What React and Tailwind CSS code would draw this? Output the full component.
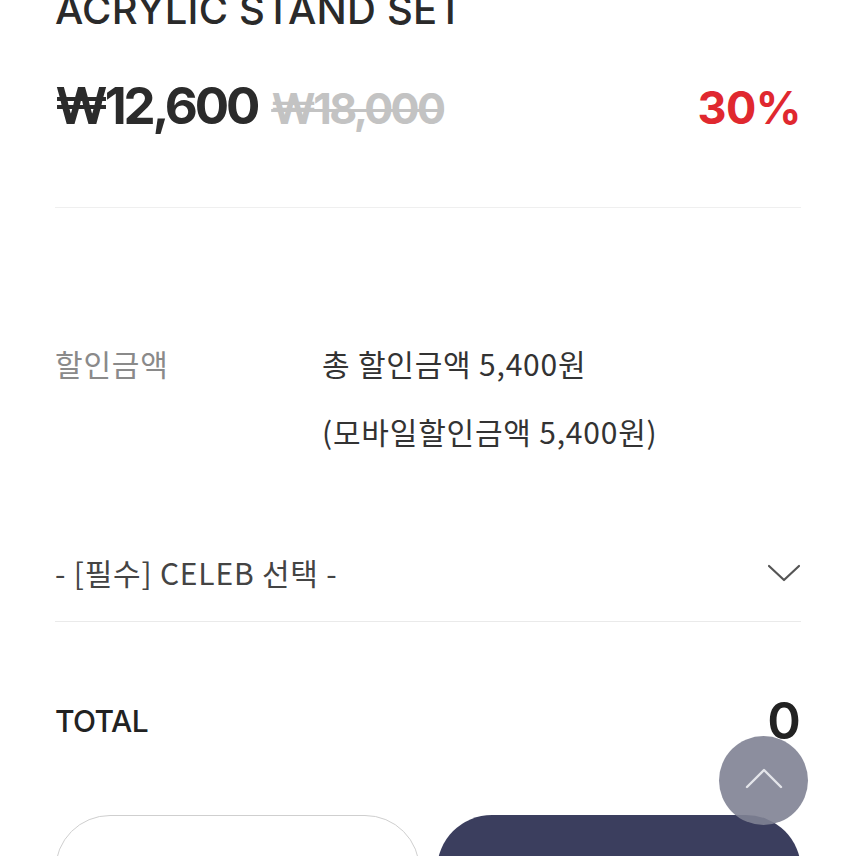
const sans = { fontFamily: 'Inter, "Noto Sans", sans-serif' };

function ChevronDown() {
  return (
    <svg width="34" height="18" viewBox="0 0 34 18" fill="none">
      <path d="M2 2 L17 16 L32 2" stroke="#555" strokeWidth="2.2" strokeLinecap="round" strokeLinejoin="round" />
    </svg>
  );
}

function ChevronUp() {
  return (
    <svg width="38" height="22" viewBox="0 0 38 22" fill="none">
      <path d="M2 20 L19 3 L36 20" stroke="#e4e5ea" strokeWidth="2.4" strokeLinecap="round" strokeLinejoin="round" />
    </svg>
  );
}

export default function App() {
  return (
    <div className="relative h-[856px] w-[856px] overflow-hidden bg-white">
      <div className="px-[55px] font-['Inter','Noto_Sans_CJK_KR',sans-serif]">
        {/* title, cut at the top edge */}
        <h1 className="mt-[-10px] h-[40px] text-[40px] leading-[40px] font-medium tracking-[0.2px] text-[#2a2a2a] whitespace-nowrap">
          ACRYLIC STAND SET
        </h1>

        {/* price */}
        <div className="mt-[50px] flex items-baseline justify-between">
          <div className="flex items-baseline gap-[14px]">
            <span className="text-[51px] leading-[52px] font-bold tracking-[-3.2px] text-[#2b2b2b]">₩12,600</span>
            <span className="text-[43px] leading-[52px] font-bold tracking-[-2.6px] text-[#c3c3c3] line-through decoration-[3px]">₩18,000</span>
          </div>
          <span className="text-[45px] leading-[52px] font-bold tracking-[-0.5px] text-[#e0282f]">30%</span>
        </div>

        <div className="mt-[73px] border-t border-[#efefef]" />

        {/* discount */}
        <div className="mt-[121px] flex font-['Noto_Sans_CJK_KR',sans-serif] text-[30px] leading-[68px] tracking-[0.8px]">
          <div className="w-[267px] text-[#8a8a8a]">할인금액</div>
          <div className="text-[#333]">
            <div>총 할인금액 5,400원</div>
            <div>(모바일할인금액 5,400원)</div>
          </div>
        </div>

        {/* option select */}
        <div className="mt-[59px] flex h-[98px] items-center justify-between border-b border-[#eaeaea] font-['Noto_Sans_CJK_KR',sans-serif] text-[30px] tracking-[0.8px] text-[#444]">
          <span>- [필수] CELEB 선택 -</span>
          <ChevronDown />
        </div>

        {/* total */}
        <div className="mt-[73px] flex h-[52px] items-center justify-between" style={sans}>
          <span className="text-[30px] font-medium tracking-[-0.6px] text-[#222]">TOTAL</span>
          <span className="text-[51px] font-semibold text-[#222]">0</span>
        </div>

        {/* buttons */}
        <div className="mt-[68px] grid grid-cols-2 gap-[17px]">
          <button className="h-[110px] rounded-[56px] border border-[#cfcfcf] bg-white" />
          <button className="h-[110px] rounded-[56px] bg-[#3b3e5e]" />
        </div>
      </div>

      {/* scroll to top */}
      <button className="absolute left-[719px] top-[736px] flex h-[89px] w-[89px] items-center justify-center rounded-full bg-[#7f8294]/90">
        <span className="mb-[6px]"><ChevronUp /></span>
      </button>
    </div>
  );
}
